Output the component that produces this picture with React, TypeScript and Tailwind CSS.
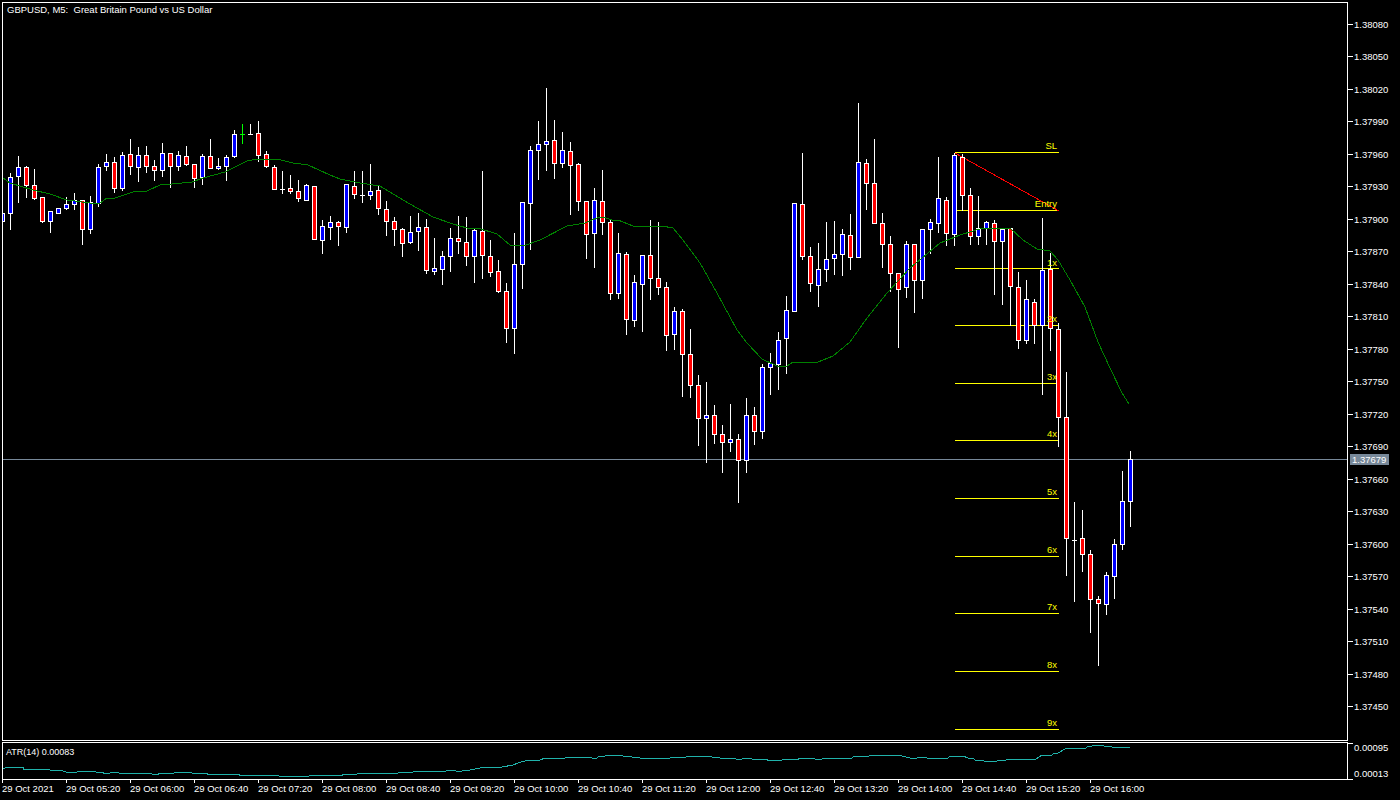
import React from 'react';

// one row per M5 bar: [high, body top, body bottom, low, colour], bars sit 8px apart
type Bar = [number, number, number, number, string];

const bars: Bar[] = [
  [213, 213, 221, 229, 'b'], [173, 177, 213, 229, 'b'], [156, 167, 176, 202, 'b'], [166, 167, 185, 197, 'r'],
  [169, 185, 198, 199, 'r'], [197, 197, 221, 222, 'r'], [211, 211, 221, 232, 'b'], [208, 208, 213, 213, 'b'],
  [197, 204, 208, 209, 'b'], [193, 200, 204, 209, 'b'], [200, 200, 229, 244, 'r'], [196, 202, 229, 233, 'b'],
  [164, 167, 203, 206, 'b'], [154, 162, 166, 170, 'b'], [157, 162, 188, 192, 'r'], [152, 155, 188, 190, 'b'],
  [139, 154, 166, 174, 'r'], [147, 155, 167, 181, 'b'], [146, 155, 166, 172, 'r'], [160, 166, 170, 180, 'r'],
  [143, 153, 170, 176, 'b'], [153, 153, 166, 187, 'r'], [151, 155, 166, 170, 'b'], [146, 156, 164, 165, 'r'],
  [164, 164, 178, 187, 'r'], [154, 156, 177, 184, 'b'], [139, 156, 168, 168, 'r'], [158, 166, 168, 169, 'b'],
  [155, 157, 166, 180, 'b'], [130, 134, 156, 157, 'b'], [124, 134, 134, 143, 'g'], [124, 134, 134, 134, 'w'],
  [121, 133, 155, 161, 'r'], [151, 154, 166, 167, 'r'], [165, 167, 189, 189, 'r'], [171, 189, 189, 193, 'w'],
  [175, 188, 191, 193, 'r'], [180, 191, 198, 201, 'r'], [184, 185, 200, 200, 'b'], [186, 186, 239, 239, 'r'],
  [220, 226, 240, 253, 'b'], [216, 222, 227, 239, 'b'], [221, 222, 226, 245, 'r'], [184, 184, 227, 232, 'b'],
  [171, 186, 194, 198, 'r'], [171, 195, 195, 202, 'w'], [164, 191, 195, 199, 'b'], [185, 190, 208, 214, 'r'],
  [201, 209, 221, 235, 'r'], [217, 221, 229, 245, 'r'], [228, 229, 243, 256, 'r'], [216, 232, 242, 243, 'b'],
  [213, 227, 231, 250, 'b'], [219, 227, 270, 273, 'r'], [238, 268, 271, 274, 'b'], [251, 256, 269, 284, 'b'],
  [228, 238, 256, 271, 'b'], [216, 238, 241, 253, 'r'], [217, 242, 256, 265, 'r'], [229, 230, 256, 282, 'b'],
  [171, 231, 255, 278, 'r'], [240, 256, 272, 276, 'r'], [260, 271, 291, 292, 'r'], [283, 291, 328, 342, 'r'],
  [233, 264, 328, 353, 'b'], [202, 202, 264, 288, 'b'], [146, 150, 203, 249, 'b'], [121, 144, 150, 179, 'b'],
  [88, 141, 144, 170, 'b'], [120, 140, 163, 178, 'r'], [132, 150, 163, 167, 'b'], [142, 151, 165, 214, 'r'],
  [163, 164, 201, 210, 'r'], [201, 201, 234, 258, 'r'], [188, 200, 233, 267, 'b'], [170, 201, 222, 234, 'r'],
  [219, 222, 293, 299, 'r'], [233, 253, 293, 298, 'b'], [252, 254, 319, 334, 'r'], [275, 282, 320, 326, 'b'],
  [255, 255, 284, 331, 'b'], [220, 255, 278, 299, 'r'], [222, 278, 287, 294, 'r'], [282, 287, 335, 350, 'r'],
  [307, 311, 334, 349, 'b'], [309, 311, 354, 396, 'r'], [329, 354, 385, 397, 'r'], [375, 385, 418, 445, 'r'],
  [382, 415, 418, 462, 'b'], [405, 415, 434, 443, 'r'], [425, 434, 442, 472, 'r'], [404, 439, 442, 451, 'b'],
  [434, 439, 460, 502, 'r'], [398, 415, 460, 472, 'b'], [407, 415, 431, 444, 'r'], [364, 367, 431, 438, 'b'],
  [353, 363, 367, 394, 'b'], [332, 340, 364, 389, 'b'], [296, 310, 338, 373, 'b'], [203, 203, 311, 311, 'b'],
  [153, 204, 256, 259, 'r'], [247, 256, 283, 291, 'r'], [243, 269, 285, 306, 'b'], [222, 259, 269, 281, 'b'],
  [221, 254, 258, 274, 'b'], [229, 234, 254, 275, 'b'], [214, 235, 257, 269, 'r'], [103, 162, 257, 257, 'b'],
  [159, 163, 183, 209, 'r'], [139, 183, 223, 223, 'r'], [213, 223, 244, 267, 'r'], [236, 244, 273, 291, 'r'],
  [273, 273, 289, 347, 'r'], [241, 244, 287, 297, 'b'], [244, 244, 280, 312, 'r'], [229, 229, 280, 298, 'b'],
  [219, 222, 229, 253, 'b'], [157, 198, 223, 232, 'b'], [197, 200, 233, 245, 'r'], [153, 155, 234, 245, 'b'],
  [154, 157, 195, 210, 'r'], [188, 195, 236, 244, 'r'], [196, 228, 236, 244, 'b'], [221, 222, 228, 244, 'b'],
  [220, 223, 241, 294, 'r'], [228, 229, 241, 304, 'b'], [228, 228, 286, 325, 'r'], [272, 287, 340, 348, 'r'],
  [280, 299, 340, 343, 'b'], [299, 302, 325, 343, 'r'], [218, 270, 325, 394, 'b'], [253, 269, 328, 350, 'r'],
  [323, 329, 417, 446, 'r'], [372, 417, 538, 575, 'r'], [502, 540, 540, 601, 'w'], [510, 538, 554, 571, 'r'],
  [550, 554, 599, 632, 'r'], [596, 599, 603, 665, 'r'], [572, 575, 604, 614, 'b'], [539, 544, 576, 598, 'b'],
  [471, 501, 544, 549, 'b'], [451, 459, 501, 526, 'b'],
];

const fill: Record<string, string> = { b: '#0000ff', r: '#ff0000' };

const maLine =
  '3,178 10,183 33,190 50,194 67,200 90,203 100,203 107,198 115,198 133,192 147,191 162,184 172,184 192,182 203,178 225,172 233,168 247,161 258,159 277,159 293,163 308,165 330,175 340,179 350,181 360,183 380,186 393,194 410,204 433,217 453,224 467,228 478,228 497,234 510,245 523,246 540,240 567,226 585,223 597,218 603,217 612,220 618,220 633,226 662,226 673,228 683,240 700,263 717,293 737,330 747,343 762,359 777,366 787,366 793,362 818,362 833,356 850,342 867,318 887,293 910,268 940,243 960,235 983,228 1010,228 1023,240 1037,249 1050,251 1058,260 1070,280 1085,307 1098,342 1110,368 1122,393 1129,404';

const atrLine =
  '3,769 7,767 23,767 23,769 45,769 50,770 60,770 66,772 77,772 78,771 95,771 96,772 103,772 103,773 110,773 111,772 118,772 119,773 151,773 152,774 158,774 158,773 174,773 175,772 191,772 192,773 207,773 207,774 239,774 239,775 278,775 279,776 309,776 310,775 342,775 342,774 357,774 358,773 398,773 399,772 413,772 414,771 446,771 447,770 450,770 456,771 462,771 463,770 470,770 480,768 487,767 502,767 513,765 518,763 528,760 540,760 545,758 565,758 567,757 590,757 592,758 597,758 598,757 605,756 608,755 622,755 623,756 631,756 632,757 638,757 640,758 670,758 671,757 686,757 687,756 711,756 712,757 719,757 720,758 735,758 736,759 742,759 743,758 751,758 752,759 767,759 767,760 782,760 783,759 798,759 798,758 814,758 815,759 822,759 823,758 852,758 853,757 857,756 869,756 870,755 901,755 902,756 910,758 917,758 918,757 926,757 927,758 948,758 949,757 953,756 963,756 968,758 974,759 975,760 983,760 984,761 997,761 998,760 1006,760 1007,759 1031,759 1033,760 1036,759 1042,755 1052,755 1053,754 1058,753 1065,749 1070,748 1086,748 1087,747 1092,746 1097,745 1103,745 1104,746 1111,746 1112,747 1130,747';

const levels: [string, number, number][] = [
  ['SL', 152, 149],
  ['Entry', 210, 207],
  ['1x', 268, 266],
  ['2x', 325, 322],
  ['3x', 383, 380],
  ['4x', 440, 437],
  ['5x', 498, 495],
  ['6x', 556, 553],
  ['7x', 613, 610],
  ['8x', 671, 668],
  ['9x', 729, 726],
];

const prices = [
  '1.38080', '1.38050', '1.38020', '1.37990', '1.37960', '1.37930', '1.37900', '1.37870', '1.37840', '1.37810', '1.37780',
  '1.37750', '1.37720', '1.37690', '1.37660', '1.37630', '1.37600', '1.37570', '1.37540', '1.37510', '1.37480', '1.37450',
];

const times = [
  '29 Oct 2021', '29 Oct 05:20', '29 Oct 06:00', '29 Oct 06:40', '29 Oct 07:20', '29 Oct 08:00', '29 Oct 08:40', '29 Oct 09:20', '29 Oct 10:00',
  '29 Oct 10:40', '29 Oct 11:20', '29 Oct 12:00', '29 Oct 12:40', '29 Oct 13:20', '29 Oct 14:00', '29 Oct 14:40', '29 Oct 15:20', '29 Oct 16:00',
];

function Candle({ bar, index }: { bar: Bar; index: number }) {
  const [high, top, bottom, low, color] = bar;
  const x = 2 + index * 8;
  if (color === 'g' || color === 'w') {
    const stroke = color === 'g' ? '#00ff00' : '#ffffff';
    return (
      <g fill={stroke}>
        <rect x={x} y={high} width={1} height={low - high + 1} />
        <rect x={x - 2} y={top} width={5} height={1} />
      </g>
    );
  }
  return (
    <g>
      <rect x={x} y={high} width={1} height={low - high + 1} fill="#ffffff" />
      <rect x={x - 2} y={top} width={5} height={bottom - top + 1} fill="#ffffff" />
      <rect x={x - 1} y={top + 1} width={3} height={Math.max(bottom - top - 1, 0)} fill={fill[color]} />
    </g>
  );
}

function MainChart() {
  return (
    <div className="relative w-[1346px] h-[739px] border border-white">
      <svg className="block" width={1344} height={737} viewBox="3 3 1344 737" shapeRendering="crispEdges">
        <rect x={3} y={459} width={1344} height={1} fill="#778899" />
        {levels.map(([name, y]) => (
          <rect key={name} x={955} y={y} width={104} height={1} fill="#ffff00" />
        ))}
        <line x1={955} y1={153} x2={1059} y2={211} stroke="#ff0000" strokeWidth={1} />
        {bars.map((bar, i) => (
          <Candle key={i} bar={bar} index={i} />
        ))}
        <polyline points={maLine} fill="none" stroke="#008000" strokeWidth={1} />
        {levels.map(([name, , y]) => (
          <text key={name} x={1057} y={y} textAnchor="end" fill="#ffff00" className="font-['Liberation_Sans',sans-serif] text-[9.5px]">
            {name}
          </text>
        ))}
      </svg>
      <span className="absolute left-[4px] top-[1px] whitespace-pre font-['Liberation_Sans',sans-serif] text-[9.5px] leading-[12px] text-white">
        GBPUSD, M5:  Great Britain Pound vs US Dollar
      </span>
    </div>
  );
}

function PriceAxis() {
  return (
    <div className="relative flex flex-col pt-[8px] -mt-[2px]">
      {prices.map((price) => (
        <div key={price} className="flex h-[32.5px] items-center gap-[1px]">
          <div className="w-[5px] h-px bg-white" />
          <span className="text-[9.5px] leading-none text-white">{price}</span>
        </div>
      ))}
      <div className="absolute left-[2px] top-[454px] flex h-[11px] w-[39px] items-center pl-[2px] bg-[#778899] text-[9.5px] leading-none text-white">
        1.37679
      </div>
    </div>
  );
}

function AtrPanel() {
  return (
    <div className="flex">
      <div className="relative w-[1346px] h-[38px] border border-white">
        <svg className="block" width={1344} height={36} viewBox="3 743 1344 36" shapeRendering="crispEdges">
          <polyline points={atrLine} fill="none" stroke="#20b2aa" strokeWidth={1} />
        </svg>
        <span className="absolute left-[3px] top-[3px] font-['Liberation_Sans',sans-serif] text-[9px] leading-[12px] text-white">
          ATR(14) 0.00083
        </span>
      </div>
      <div className="flex flex-col justify-between h-[38px]">
        <div className="flex gap-[1px] pt-[1px]">
          <div className="w-[5px] h-px bg-white" />
          <span className="text-[9.5px] leading-none text-white">0.00095</span>
        </div>
        <div className="flex items-end gap-[1px]">
          <div className="w-[5px] h-px bg-white" />
          <span className="text-[9.5px] leading-none text-white pb-[2px]">0.00013</span>
        </div>
      </div>
    </div>
  );
}

function TimeAxis() {
  return (
    <div className="flex">
      {times.map((t) => (
        <div key={t} className="w-[64px] shrink-0">
          <div className="w-px h-[3px] bg-white" />
          <div className="whitespace-nowrap text-[9.5px] leading-[11px] text-white">{t}</div>
        </div>
      ))}
    </div>
  );
}

export default function App() {
  return (
    <div className="w-[1400px] h-[800px] overflow-hidden bg-black pt-[2px] pl-[2px] font-['Liberation_Sans',sans-serif]">
      <div className="flex">
        <MainChart />
        <PriceAxis />
      </div>
      <div className="h-px" />
      <AtrPanel />
      <TimeAxis />
    </div>
  );
}
